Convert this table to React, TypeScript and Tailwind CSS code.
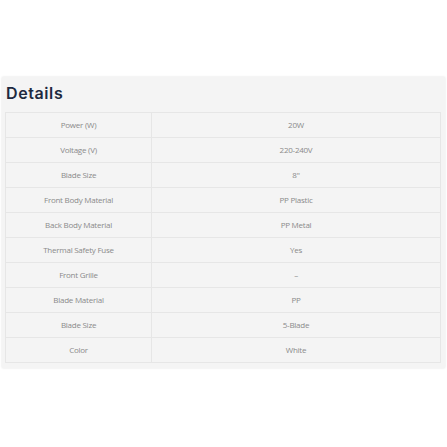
import React from 'react';

const specs: [string, string][] = [
  ['Power (W)', '20W'],
  ['Voltage (V)', '220-240V'],
  ['Blade Size', '8"'],
  ['Front Body Material', 'PP Plastic'],
  ['Back Body Material', 'PP Metal'],
  ['Thermal Safety Fuse', 'Yes'],
  ['Front Grille', '–'],
  ['Blade Material', 'PP'],
  ['Blade Size', '5-Blade'],
  ['Color', 'White'],
];

export default function App() {
  return (
    <div className="w-[447px] h-[447px] bg-white pt-[77px] px-[2px]">
      <div className="bg-[#f4f4f4] shadow-[0_0_2px_rgba(0,0,0,0.12)] px-[3px] pt-[1px] pb-[5px]">
        <h2 className="text-[16px] leading-[30px] mb-[4px] font-semibold text-[#1e2a40] tracking-[0.6px] pl-[1px] font-['Inter',sans-serif]">
          Details
        </h2>
        <table className="w-[436px] border-collapse font-['Open_Sans',sans-serif] text-[8px] tracking-[-0.25px] text-[#8a8a8a]">
          <tbody>
            {specs.map(([k, v], i) => (
              <tr key={i} className="h-[25px]">
                <td className="w-[146px] border border-[#e6e6e6] text-center">{k}</td>
                <td className="border border-[#e6e6e6] text-center">{v}</td>
              </tr>
            ))}
          </tbody>
        </table>
      </div>
    </div>
  );
}
